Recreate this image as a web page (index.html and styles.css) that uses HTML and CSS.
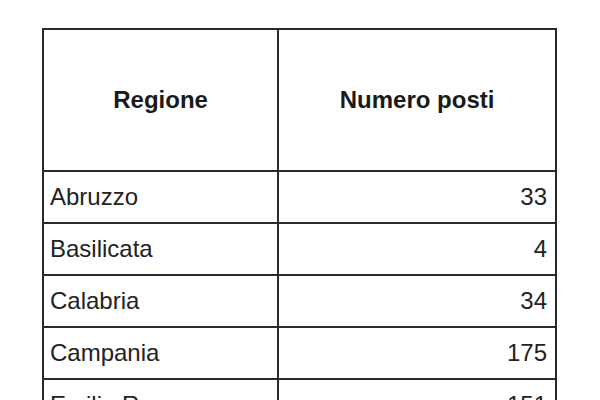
FILE: index.html
```html
<!DOCTYPE html>
<html lang="it">
<head>
<meta charset="utf-8">
<title>Numero posti per regione</title>
<link rel="stylesheet" href="styles.css">
</head>
<body>
<div class="page">
  <table class="posti">
    <colgroup>
      <col class="col-regione">
      <col class="col-numero">
    </colgroup>
    <thead>
      <tr>
        <th>Regione</th>
        <th>Numero posti</th>
      </tr>
    </thead>
    <tbody>
      <tr><td class="name">Abruzzo</td><td class="num">33</td></tr>
      <tr><td class="name">Basilicata</td><td class="num">4</td></tr>
      <tr><td class="name">Calabria</td><td class="num">34</td></tr>
      <tr><td class="name">Campania</td><td class="num">175</td></tr>
      <tr><td class="name">Emilia Romagna</td><td class="num">151</td></tr>
    </tbody>
  </table>
</div>
</body>
</html>
```
FILE: styles.css
```css
html, body {
  margin: 0;
  padding: 0;
  background: #fff;
  overflow: hidden;
  height: 400px;
}
.page {
  padding: 28px 0 0 42px;
}
.posti {
  border-collapse: collapse;
  width: 515px;
  font-family: "Liberation Sans", Arial, sans-serif;
  font-size: 24px;
  color: #222;
}
.col-regione { width: 236px; }
.col-numero { width: 279px; }
.posti th,
.posti td {
  border: 2px solid #2a2a2a;
  padding: 0;
}
.posti th {
  height: 140px;
  font-weight: bold;
  text-align: center;
  vertical-align: middle;
  color: #1a1a1a;
}
.posti td {
  height: 50px;
  vertical-align: middle;
}
.posti td.name {
  text-align: left;
  padding-left: 6px;
}
.posti td.num {
  text-align: right;
  padding-right: 8px;
}
```
